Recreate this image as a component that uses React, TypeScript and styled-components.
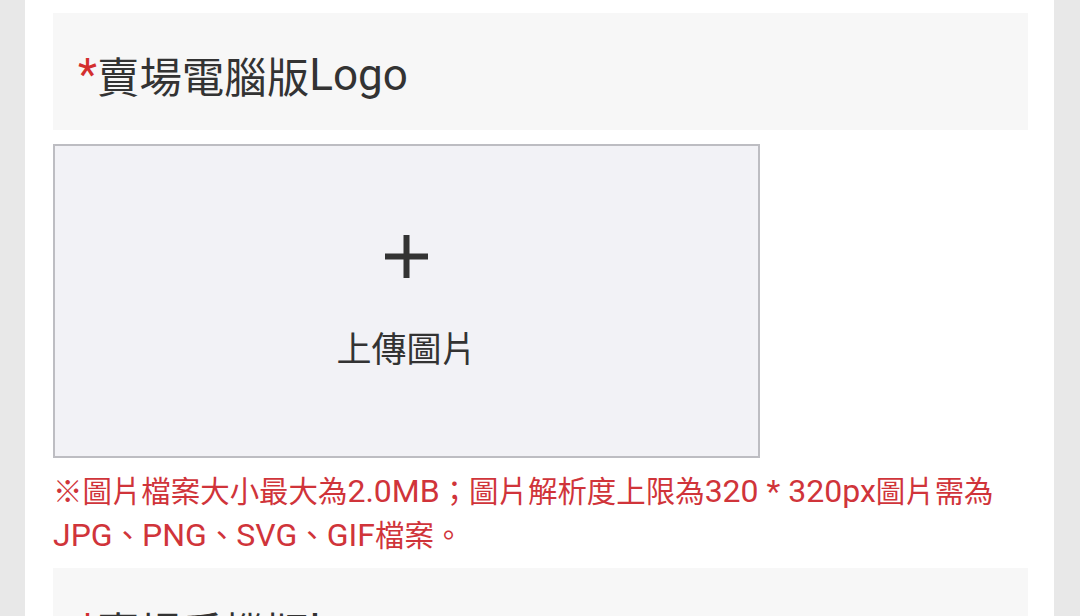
import styled, { createGlobalStyle } from "styled-components";

const GlobalStyle = createGlobalStyle`
    html, body {
        margin: 0;
        padding: 0;
        background: #e8e8e8;
        font-family: Roboto, "Noto Sans CJK TC", sans-serif;
        overflow: hidden;
    }
`;

const Page = styled.div`
    margin: 0 26px 0 25px;
    min-height: 616px;
    background: #ffffff;
    padding: 13px 26px 0 28px;
    box-sizing: border-box;
`;

const SectionHeader = styled.div<{ $spaced?: boolean }>`
    background: #f7f7f7;
    height: 117px;
    margin-top: ${(props) => (props.$spaced ? "10px" : "0")};
    display: flex;
    align-items: center;
    padding: 6px 0 0 25px;
    box-sizing: border-box;
    font-size: 44px;
    color: #333333;
    white-space: nowrap;
`;

// CJK glyphs render a little smaller than the Latin ones in the original
const Han = styled.span<{ $scale?: number }>`
    font-size: ${(props) => props.$scale ?? 0.92}em;
`;

const Required = styled.span`
    color: #d32f2f;
`;

const UploadBox = styled.div`
    margin-top: 14px;
    width: 707px;
    height: 314px;
    box-sizing: border-box;
    background: #f2f2f6;
    border: 2px solid #bdbdc2;
    display: flex;
    flex-direction: column;
    align-items: center;
    justify-content: center;
    color: #333333;
    cursor: pointer;
`;

const PlusIcon = styled.svg`
    width: 43px;
    height: 43px;
    display: block;
`;

const UploadLabel = styled.div`
    margin-top: 55px;
    font-size: 35px;
    line-height: 1;
`;

const Note = styled.p`
    margin: 12px 0 0;
    font-size: 32px;
    line-height: 43px;
    color: #d0343a;
`;

function LogoTitle({ name }: { name: string }) {
    return (
        <>
            <Required>*</Required>
            <Han $scale={0.965}>{name}</Han>Logo
        </>
    );
}

function LogoField() {
    return (
        <>
            <SectionHeader>
                <LogoTitle name="賣場電腦版" />
            </SectionHeader>
            <UploadBox>
                <PlusIcon viewBox="0 0 43 43">
                    <rect x="18.5" y="0" width="6" height="43" fill="#333" />
                    <rect x="0" y="18.5" width="43" height="6" fill="#333" />
                </PlusIcon>
                <UploadLabel>上傳圖片</UploadLabel>
            </UploadBox>
            <Note>
                <Han>※圖片檔案大小最大為</Han>2.0MB<Han>；圖片解析度上限為</Han>320 * 320px<Han>圖片需為</Han>
                <br />
                JPG<Han>、</Han>PNG<Han>、</Han>SVG<Han>、</Han>GIF<Han>檔案。</Han>
            </Note>
        </>
    );
}

export default function App() {
    return (
        <>
            <GlobalStyle />
            <Page>
                <LogoField />
                <SectionHeader $spaced>
                    <LogoTitle name="賣場手機版" />
                </SectionHeader>
            </Page>
        </>
    );
}
